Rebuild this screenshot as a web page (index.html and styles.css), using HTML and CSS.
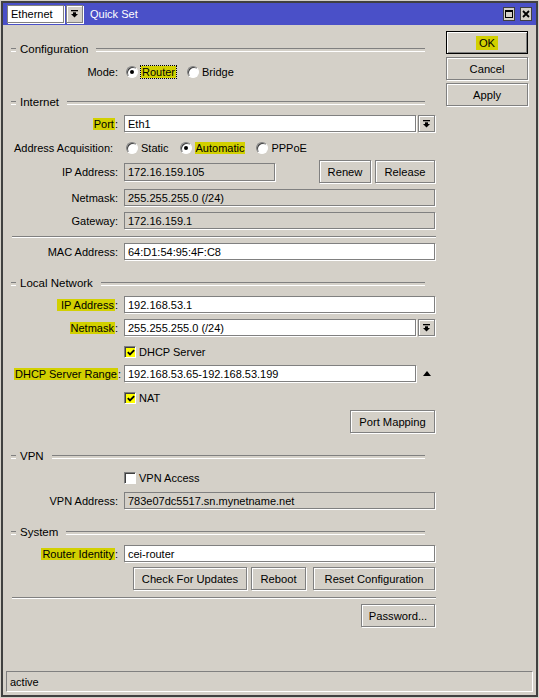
FILE: index.html
```html
<!DOCTYPE html>
<html>
<head>
<meta charset="utf-8">
<title>Quick Set</title>
<link rel="stylesheet" href="styles.css">
</head>
<body>
<div class="window">
  <div class="titlebar">
    <div class="tb-select">Ethernet</div>
    <div class="dd-btn tb-dd"><svg width="7" height="8" viewBox="0 0 7 8"><rect x="0" y="0" width="7" height="1.3"/><rect x="2" y="2.3" width="3" height="1.7"/><path d="M0 4h7L3.5 7.6z"/></svg></div>
    <span class="title">Quick Set</span>
    <div class="tb-btns">
      <span class="tb-btn"><svg width="8" height="8" viewBox="0 0 8 8"><rect x="0.5" y="0.5" width="7" height="7" fill="none" stroke="#000"/><rect x="0" y="0" width="8" height="2"/></svg></span>
      <span class="tb-btn"><svg width="8" height="8" viewBox="0 0 8 8"><path d="M1 1L7 7M7 1L1 7" stroke="#000" stroke-width="1.8"/></svg></span>
    </div>
  </div>

  <div class="content">
    <div class="main">
      <div class="sec mt17"><span class="sec-text">Configuration</span></div>
      <div class="row mt7">
        <span class="label">Mode:</span>
        <div class="opts">
          <span class="opt"><span class="radio on"></span><span class="opt-text hl focus">Router</span></span>
          <span class="opt"><span class="radio"></span><span class="opt-text">Bridge</span></span>
        </div>
      </div>

      <div class="sec mt15"><span class="sec-text">Internet</span></div>
      <div class="row mt6">
        <span class="label"><span class="hl">Port</span>:</span>
        <div class="field-dd"><span class="input">Eth1</span><span class="dd-btn"><svg width="7" height="8" viewBox="0 0 7 8"><rect x="0" y="0" width="7" height="1.3"/><rect x="2" y="2.3" width="3" height="1.7"/><path d="M0 4h7L3.5 7.6z"/></svg></span></div>
      </div>
      <div class="row mt7">
        <span class="label label-wide">Address Acquisition:</span>
        <div class="opts">
          <span class="opt"><span class="radio"></span><span class="opt-text">Static</span></span>
          <span class="opt"><span class="radio on"></span><span class="opt-text hl">Automatic</span></span>
          <span class="opt"><span class="radio"></span><span class="opt-text">PPPoE</span></span>
        </div>
      </div>
      <div class="row row-btn mt4">
        <span class="label">IP Address:</span>
        <div class="field-btns">
          <span class="input ro ip-short">172.16.159.105</span>
          <span class="btn btn-renew">Renew</span>
          <span class="btn btn-release">Release</span>
        </div>
      </div>
      <div class="row mt6">
        <span class="label">Netmask:</span>
        <span class="input ro">255.255.255.0 (/24)</span>
      </div>
      <div class="row mt6">
        <span class="label">Gateway:</span>
        <span class="input ro">172.16.159.1</span>
      </div>
      <div class="sep mt7"></div>
      <div class="row mt5">
        <span class="label">MAC Address:</span>
        <span class="input">64:D1:54:95:4F:C8</span>
      </div>

      <div class="sec mt16"><span class="sec-text">Local Network</span></div>
      <div class="row mt6">
        <span class="label"><span class="hl hl-ip">IP Address</span>:</span>
        <span class="input">192.168.53.1</span>
      </div>
      <div class="row mt6">
        <span class="label"><span class="hl">Netmask</span>:</span>
        <div class="field-dd"><span class="input">255.255.255.0 (/24)</span><span class="dd-btn"><svg width="7" height="8" viewBox="0 0 7 8"><rect x="0" y="0" width="7" height="1.3"/><rect x="2" y="2.3" width="3" height="1.7"/><path d="M0 4h7L3.5 7.6z"/></svg></span></div>
      </div>
      <div class="row mt7">
        <span class="label"></span>
        <span class="opt"><span class="check on"><svg width="8" height="7" viewBox="0 0 8 7"><path d="M0.8 3.2L3 5.4L7.2 1.2" fill="none" stroke="#000" stroke-width="1.9"/></svg></span><span class="opt-text">DHCP Server</span></span>
      </div>
      <div class="row mt5">
        <span class="label label-wide"><span class="hl">DHCP Server Range</span>:</span>
        <div class="field-dd"><span class="input">192.168.53.65-192.168.53.199</span><span class="tri-box"><span class="tri-up"></span></span></div>
      </div>
      <div class="row mt7">
        <span class="label"></span>
        <span class="opt"><span class="check on"><svg width="8" height="7" viewBox="0 0 8 7"><path d="M0.8 3.2L3 5.4L7.2 1.2" fill="none" stroke="#000" stroke-width="1.9"/></svg></span><span class="opt-text">NAT</span></span>
      </div>
      <div class="btn-row mt4">
        <span class="btn btn-portmap">Port Mapping</span>
      </div>

      <div class="sec mt16"><span class="sec-text">VPN</span></div>
      <div class="row mt6">
        <span class="label"></span>
        <span class="opt"><span class="check"></span><span class="opt-text">VPN Access</span></span>
      </div>
      <div class="row mt6">
        <span class="label">VPN Address:</span>
        <span class="input ro">783e07dc5517.sn.mynetname.net</span>
      </div>

      <div class="sec mt16"><span class="sec-text">System</span></div>
      <div class="row mt6">
        <span class="label"><span class="hl">Router Identity</span>:</span>
        <span class="input">cei-router</span>
      </div>
      <div class="btn-row mt5">
        <span class="btn btn-updates">Check For Updates</span>
        <span class="btn btn-reboot">Reboot</span>
        <span class="btn btn-reset">Reset Configuration</span>
      </div>
      <div class="sep mt7"></div>
      <div class="btn-row mt5">
        <span class="btn btn-password">Password...</span>
      </div>
    </div>

    <div class="side">
      <span class="btn side-btn default"><span class="hl">OK</span></span>
      <span class="btn side-btn">Cancel</span>
      <span class="btn side-btn">Apply</span>
    </div>
  </div>

  <div class="status">active</div>
</div>
</body>
</html>
```

FILE: styles.css
```css
* { box-sizing: border-box; }
html, body { margin: 0; padding: 0; }
body {
  background: #d4d0c8;
  width: 539px;
  height: 698px;
  overflow: hidden;
  font-family: "Liberation Sans", Arial, sans-serif;
  font-size: 11px;
  color: #000;
}
.window {
  margin: 1px 0 0 1px;
  width: 537px;
  height: 696px;
  border: 2px solid #404040;
  display: flex;
  flex-direction: column;
}
.titlebar {
  height: 22px;
  flex-shrink: 0;
  background: #4a50c8;
  display: flex;
  align-items: center;
  padding-left: 4px;
}
.tb-select {
  width: 57px;
  height: 18px;
  background: #fff;
  border: 1px solid #808080;
  box-shadow: 1px 1px 0 #fff;
  padding-left: 3px;
  display: flex;
  align-items: center;
}
.dd-btn {
  width: 17px;
  height: 17px;
  flex-shrink: 0;
  background: #d4d0c8;
  border: 1px solid #808080;
  box-shadow: 1px 1px 0 #fff, inset 1px 1px 0 #fff;
  display: flex;
  align-items: center;
  justify-content: center;
}
.tb-dd { margin-left: 2px; height: 18px; }
.title {
  color: #fff;
  font-size: 11px;
  margin-left: 7px;
}
.tb-btns {
  margin-left: auto;
  margin-right: 4px;
  display: flex;
  gap: 5px;
}
.tb-btn {
  width: 12px;
  height: 14px;
  background: #d4d0c8;
  border: 1px solid #404040;
  display: flex;
  align-items: center;
  justify-content: center;
}

.content {
  flex: 1;
  display: flex;
}
.main {
  width: 437px;
  padding-left: 8px;
  display: flex;
  flex-direction: column;
}
.side {
  margin-left: 6px;
  padding-top: 6px;
  display: flex;
  flex-direction: column;
  gap: 3px;
}

.mt4 { margin-top: 4px; }
.mt5 { margin-top: 5px; }
.mt6 { margin-top: 6px; }
.mt7 { margin-top: 7px; }
.mt15 { margin-top: 15px; }
.mt16 { margin-top: 16px; }
.mt17 { margin-top: 17px; }

.sec {
  width: 414px;
  height: 14px;
  display: flex;
  align-items: center;
}
.sec::before, .sec::after {
  content: "";
  height: 2px;
  border-top: 1px solid #808080;
  border-bottom: 1px solid #fff;
  margin-top: 2px;
}
.sec::before { width: 5px; margin-right: 4px; }
.sec::after { flex: 1; margin-left: 8px; }
.sec-text { font-size: 11.5px; }

.sep {
  width: 424px;
  margin-left: 1px;
  height: 2px;
  border-top: 1px solid #808080;
  border-bottom: 1px solid #fff;
}

.row {
  display: grid;
  grid-template-columns: 107px 311px;
  column-gap: 6px;
  align-items: center;
  height: 17px;
}
.row-btn { height: 23px; }
.label {
  text-align: right;
  white-space: nowrap;
}
.label-wide {
  text-align: left;
  padding-left: 3px;
  overflow: visible;
}
.hl {
  background: #d2d000;
  padding: 0 1px;
}
.hl-ip { padding-left: 4px; }

.input {
  height: 17px;
  background: #fff;
  border: 1px solid #808080;
  box-shadow: 1px 1px 0 #fff;
  padding-left: 3px;
  display: flex;
  align-items: center;
  white-space: nowrap;
  overflow: hidden;
}
.input.ro { background: #d4d0c8; }

.field-dd {
  display: flex;
  align-items: center;
  gap: 2px;
}
.field-dd .input { flex: 1; }
.tri-box {
  width: 17px;
  height: 17px;
  display: flex;
  align-items: center;
  justify-content: center;
}
.tri-up {
  width: 0;
  height: 0;
  border-left: 4.5px solid transparent;
  border-right: 4.5px solid transparent;
  border-bottom: 5px solid #000;
  margin-left: 1px;
}

.field-btns {
  display: flex;
  align-items: center;
}
.ip-short { width: 151px; height: 18px; margin-right: auto; }

.btn {
  height: 23px;
  background: #d4d0c8;
  border: 1px solid #808080;
  box-shadow: 1px 1px 0 #fff, inset 1px 1px 0 #fff;
  display: flex;
  align-items: center;
  justify-content: center;
  white-space: nowrap;
  font-size: 11.2px;
}
.btn-renew { width: 52px; }
.btn-release { width: 60px; margin-left: 4px; }
.btn-row {
  width: 424px;
  display: flex;
  justify-content: flex-end;
}
.btn-portmap { width: 85px; }
.btn-updates { width: 114px; }
.btn-reboot { width: 55px; margin-left: 4px; }
.btn-reset { width: 122px; margin-left: 7px; }
.btn-password { width: 74px; }

.side-btn { width: 82px; }
.side-btn.default {
  border: 1px solid #000;
  box-shadow: inset 1px 1px 0 #fff, inset -1px -1px 0 #808080;
}
.side-btn .hl { padding: 1px 3px; }

.opts {
  display: flex;
  align-items: center;
  padding-left: 2px;
}
.opt {
  display: flex;
  align-items: center;
  margin-right: 11px;
}
.opt-text { margin-left: 3px; }
.focus {
  outline: 1px dotted #000;
  outline-offset: 0;
}
.radio {
  width: 12px;
  height: 12px;
  border-radius: 50%;
  background: #fff;
  border: 1px solid;
  border-color: #808080 #fff #fff #808080;
  box-shadow: inset 1px 1px 0 #404040;
  position: relative;
  flex-shrink: 0;
}
.radio.on::after {
  content: "";
  position: absolute;
  left: 3px;
  top: 3px;
  width: 4px;
  height: 4px;
  border-radius: 50%;
  background: #000;
}
.check {
  width: 12px;
  height: 12px;
  background: #fff;
  border: 1px solid;
  border-color: #808080 #fff #fff #808080;
  box-shadow: inset 1px 1px 0 #404040;
  display: flex;
  align-items: center;
  justify-content: center;
  flex-shrink: 0;
}
.check.on { background: #ffff00; }
.check svg { margin: 1px 0 0 1px; }

.status {
  margin: 0 3px 3px 3px;
  height: 21px;
  flex-shrink: 0;
  border: 1px solid;
  border-color: #808080 #fff #fff #808080;
  padding-left: 3px;
  display: flex;
  align-items: center;
}
```
